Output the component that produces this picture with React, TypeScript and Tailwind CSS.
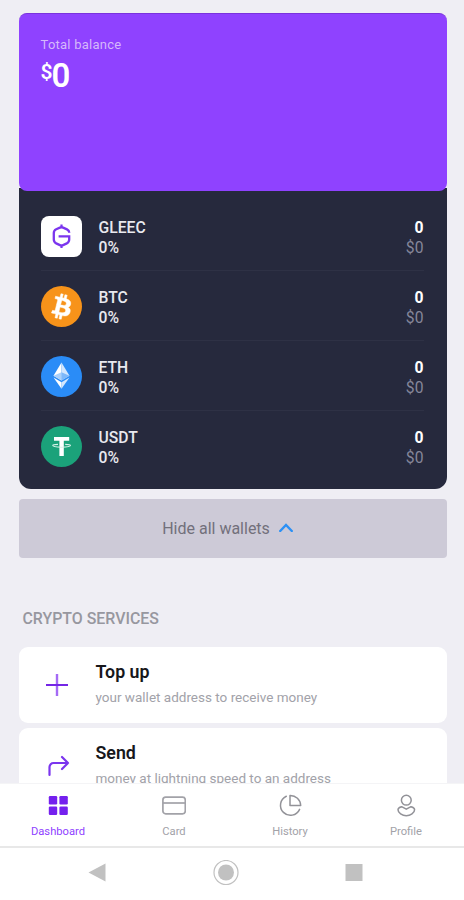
import type { ReactNode } from "react";

type Wallet = {
  symbol: string;
  icon: ReactNode;
};

const GleecIcon = () => (
  <svg width="41" height="41" viewBox="0 0 41 41" fill="none">
    <rect width="41" height="41" rx="8" fill="#fff" />
    <path
      d="M28.3 16.8C28.2 14.9 27.3 14 26 13.4L22.1 11.6Q20.5 10.9 18.9 11.6L15.2 13.3Q12.8 14.4 12.8 17V23.6Q12.8 26.2 15.2 27.4L18.9 29.1Q20.5 29.8 22.1 29.1L25.8 27.4Q28.2 26.2 28.2 23.6V20.4H17.6"
      stroke="#7b35ee"
      strokeWidth="2.3"
    />
    <path d="M20.5 8.6v3M20.5 29v3" stroke="#7b35ee" strokeWidth="2.2" />
  </svg>
);

const BtcIcon = () => (
  <svg width="41" height="41" viewBox="0 0 32 32">
    <circle cx="16" cy="16" r="16" fill="#f7931a" />
    <path
      fill="#fff"
      stroke="#fff"
      strokeWidth="0.4"
      d="M23.189 14.02c.314-2.096-1.283-3.223-3.465-3.975l.708-2.84-1.728-.43-.69 2.765c-.454-.114-.92-.22-1.385-.326l.695-2.783L15.596 6l-.708 2.839c-.376-.086-.746-.17-1.104-.26l.002-.009-2.384-.595-.46 1.846s1.283.294 1.256.312c.7.175.826.638.805 1.006l-.806 3.235c.048.012.11.03.18.057l-.183-.045-1.13 4.532c-.086.212-.303.531-.793.41.018.025-1.256-.313-1.256-.313l-.858 1.978 2.25.561c.418.105.828.215 1.231.318l-.715 2.872 1.727.43.708-2.84c.472.127.93.245 1.378.357l-.706 2.828 1.728.43.715-2.866c2.948.558 5.164.333 6.097-2.333.752-2.146-.037-3.385-1.588-4.192 1.13-.26 1.98-1.003 2.207-2.538zm-3.95 5.538c-.533 2.147-4.148.986-5.32.695l.95-3.805c1.172.293 4.929.872 4.37 3.11zm.535-5.569c-.487 1.953-3.495.96-4.47.717l.86-3.45c.975.243 4.118.696 3.61 2.733z"
    />
  </svg>
);

const EthIcon = () => (
  <svg width="41" height="41" viewBox="0 0 41 41">
    <circle cx="20.5" cy="20.5" r="20.5" fill="#2a8cf7" />
    <path d="M20.5 6.6 12.5 19.8 20.5 24.6z" fill="#fff" />
    <path d="M20.5 6.6 28.5 19.8 20.5 24.6z" fill="#d3e7fe" />
    <path d="M20.5 16.2 12.5 19.8 20.5 24.6z" fill="#a9d0fb" />
    <path d="M20.5 16.2 28.5 19.8 20.5 24.6z" fill="#7db8fa" />
    <path d="M12.5 21.6 20.5 26.3V32.8z" fill="#fff" />
    <path d="M28.5 21.6 20.5 26.3V32.8z" fill="#d3e7fe" />
  </svg>
);

const UsdtIcon = () => (
  <svg width="41" height="41" viewBox="0 0 41 41">
    <circle cx="20.5" cy="20.5" r="20.5" fill="#1ba27a" />
    <path d="M13 10.9h15.2v3.8h-5.4V30h-4.4V14.7H13z" fill="#fff" />
    <path
      d="M17 18.4c-3.6.2-5.3.4-5.3.9 0 1.1 3.9 1.9 8.9 1.9s8.9-.8 8.9-1.9c0-.5-1.700-.7-5.300-.9"
      fill="none"
      stroke="#d9f1e9"
      strokeWidth="1.1"
    />
  </svg>
);

const wallets: Wallet[] = [
  { symbol: "GLEEC", icon: <GleecIcon /> },
  { symbol: "BTC", icon: <BtcIcon /> },
  { symbol: "ETH", icon: <EthIcon /> },
  { symbol: "USDT", icon: <UsdtIcon /> },
];

const PlusIcon = () => (
  <svg width="24" height="24" viewBox="0 0 24 24" fill="none" strokeWidth="2">
    <path d="M12 1v22" stroke="#a46af5" strokeWidth="2.4" />
    <path d="M1 12h22" stroke="#7426e6" />
  </svg>
);

const SendIcon = () => (
  <svg
    width="22"
    height="22"
    viewBox="0 0 22 22"
    fill="none"
    stroke="#7b35ee"
    strokeWidth="2.2"
    strokeLinecap="round"
    strokeLinejoin="round"
  >
    <path d="M1.5 20V12a4 4 0 0 1 4-4H20M14 2l6 6-6 6" />
  </svg>
);

const services = [
  {
    title: "Top up",
    text: "your wallet address to receive money",
    icon: <PlusIcon />,
  },
  {
    title: "Send",
    text: "money at lightning speed to an address",
    icon: (
      <span className="pl-1">
        <SendIcon />
      </span>
    ),
  },
];

const DashboardIcon = () => (
  <svg width="24" height="24" viewBox="0 0 24 24" fill="#7420ee">
    <rect x="2.8" y="2" width="8.4" height="8.4" rx="1.2" />
    <rect x="13.4" y="2" width="8.4" height="8.4" rx="1.2" />
    <rect x="2.8" y="12.6" width="8.4" height="8.4" rx="1.2" />
    <rect x="13.4" y="12.6" width="8.4" height="8.4" rx="1.2" />
  </svg>
);

const CardIcon = () => (
  <svg width="24" height="24" viewBox="0 0 24 24" fill="none" stroke="#a2a2a8" strokeWidth="1.7">
    <rect x="0.9" y="3.2" width="22.4" height="16.6" rx="2.8" />
    <path d="M1 9h22.2" />
  </svg>
);

const HistoryIcon = () => (
  <svg
    width="24"
    height="24"
    viewBox="0 0 24 24"
    fill="none"
    stroke="#929298"
    strokeWidth="1.5"
    strokeLinejoin="round"
  >
    <path d="M8.3 2.2A10 10 0 1 0 21.600 15.4" strokeLinecap="round" />
    <path d="M12 1.4V11.5h10.7A10.4 10.4 0 0 0 12 1.4z" />
  </svg>
);

const ProfileIcon = () => (
  <svg
    width="24"
    height="24"
    viewBox="0 0 24 24"
    fill="none"
    stroke="#929298"
    strokeWidth="1.5"
    strokeLinejoin="round"
  >
    <circle cx="12.3" cy="6.2" r="4.9" />
    <path d="M7.6 12.7C5.2 13.3 4 14.4 4 15.7c0 3 4.2 6 8.3 6s8.3-3 8.3-6c0-1.3-1.2-2.4-3.600-3l-4.700 2.500z" />
  </svg>
);

const tabs = [
  { label: "Dashboard", icon: <DashboardIcon /> },
  { label: "Card", icon: <CardIcon /> },
  { label: "History", icon: <HistoryIcon /> },
  { label: "Profile", icon: <ProfileIcon /> },
];

const BalanceCard = () => (
  <section>
    <div className="relative z-10 h-[178px] rounded-lg border-t border-[#7a33dc] bg-[#8f42ff] px-[22px] pt-[23px]">
      <p className="text-[13px] leading-4 tracking-[0.25px] text-[#d5b8fb]">Total balance</p>
      <p className="mt-[5px] flex text-[33px] leading-9 font-semibold text-white">
        <span className="mt-[-4px] w-[11px] text-[21px]">$</span>0
      </p>
    </div>

    <ul className="-mt-[3px] h-[301px] rounded-b-[12px] bg-[#26293d] pt-[13px] pr-[23px] pl-[22px]">
      {wallets.map(({ symbol, icon }) => (
        <li
          key={symbol}
          className="flex h-[70px] items-center justify-between border-b border-[#2e3145] pt-px text-[15.7px] leading-5 font-medium text-[#e9e9ef] last:border-b-0"
        >
          <div className="flex items-center gap-[17px]">
            {icon}
            <div className="pt-[3px]">
              <p>{symbol}</p>
              <p>0%</p>
            </div>
          </div>
          <div className="pt-[3px] text-right">
            <p className="font-bold text-white">0</p>
            <p className="font-normal text-[#85869a]">$0</p>
          </div>
        </li>
      ))}
    </ul>
  </section>
);

export default function App() {
  return (
    <div className="flex h-[900px] w-[464px] flex-col overflow-hidden bg-[#efeef4] font-['Roboto',sans-serif]">
      <main className="h-[784px] shrink-0 overflow-hidden border-b border-[#f4f4f6] pt-[13px] pr-[17.500px] pl-[18.500px]">
        <BalanceCard />

        <button
          type="button"
          className="mt-[10px] flex h-[59px] w-full items-center justify-center gap-[9px] rounded bg-[#cdcad7] pr-[10px] text-[16px] text-[#72707b]"
        >
          Hide all wallets
          <svg width="14" height="9" viewBox="0 0 14 9" fill="none" className="-mt-[3px]">
            <path d="M1.2 8 7 2l5.8 6" stroke="#2b90f5" strokeWidth="2.4" strokeLinecap="round" />
          </svg>
        </button>

        <h2 className="mt-[51px] pl-1 text-[15.9px] leading-5 font-medium text-[#97979f]">
          CRYPTO SERVICES
        </h2>

        <div className="mt-[18px] grid gap-[5px]">
          {services.map(({ title, text, icon }) => (
            <article key={title} className="flex h-[76px] rounded-[9px] bg-white">
              <div className="flex w-[77px] items-center justify-center">{icon}</div>
              <div className="pt-[13px]">
                <h3 className="text-[17.8px] leading-6 font-semibold text-[#17171b]">{title}</h3>
                <p className="mt-[3px] text-[13.5px] leading-5 text-[#a2a2a9]">{text}</p>
              </div>
            </article>
          ))}
        </div>
      </main>

      <nav className="grid h-[64px] shrink-0 grid-cols-4 border-b-2 border-[#e8e8e8] bg-white pt-[10px]">
        {tabs.map(({ label, icon }) => (
          <a
            key={label}
            className="flex flex-col items-center gap-[6px] text-[11.2px] leading-4 text-[#a2a2a8] first:text-[#8f42ff]"
          >
            {icon}
            {label}
          </a>
        ))}
      </nav>

      <footer className="flex flex-1 justify-center gap-[102px] bg-white pt-[12px] pr-[12px]">
        <svg width="26" height="26" viewBox="0 0 26 26">
          <path d="M3.500 12.500 20.500 3.500v18z" fill="#c1c1c1" />
        </svg>
        <svg width="26" height="26" viewBox="0 0 26 26">
          <circle cx="13" cy="12.500" r="12" fill="none" stroke="#c1c1c1" strokeWidth="1.2" />
          <circle cx="13" cy="12.500" r="8" fill="#c1c1c1" />
        </svg>
        <svg width="26" height="26" viewBox="0 0 26 26">
          <rect x="4.500" y="4" width="17" height="17" fill="#c1c1c1" />
        </svg>
      </footer>
    </div>
  );
}
